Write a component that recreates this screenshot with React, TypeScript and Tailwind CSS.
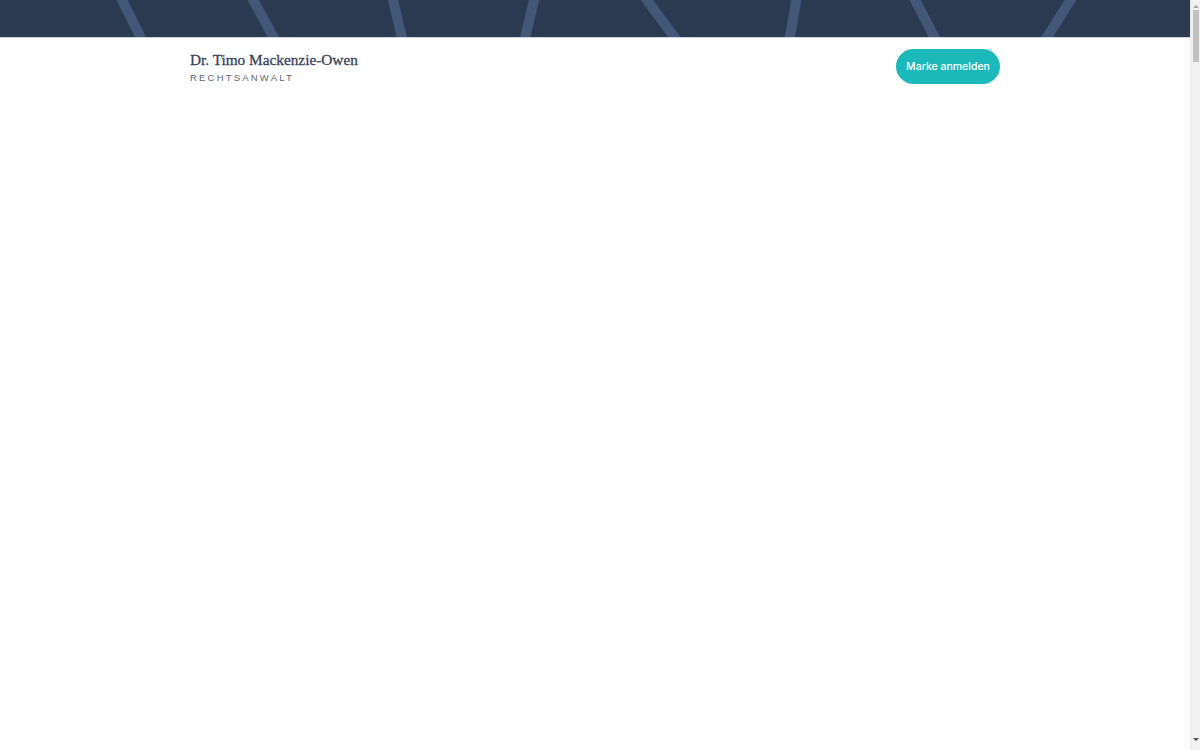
import React from 'react';

const stripes = [
  [120, 0, 143, 38],
  [251, 0, 276, 38],
  [392, 0, 403, 38],
  [535, 0, 524, 38],
  [644, 0, 678, 38],
  [797, 0, 789, 38],
  [913, 0, 937, 38],
  [1073, 0, 1044, 38],
];

function Band() {
  return (
    <div className="h-[38px] w-full bg-[#2c3a51] border-b border-[#c9d6dc] overflow-hidden">
      <svg width="1190" height="37" viewBox="0 0 1190 37">
        {stripes.map(([x1, y1, x2, y2], i) => (
          <line key={i} x1={x1} y1={y1 - 4} x2={x2} y2={y2 + 4} stroke="#435879" strokeWidth={10} />
        ))}
      </svg>
    </div>
  );
}

function Scrollbar() {
  return (
    <div className="w-[10px] h-full bg-[#f1f1f1] border-l border-[#e8e8e8] flex flex-col items-center">
      <svg width="6" height="8" viewBox="0 0 6 8" className="mt-[2px]">
        <path d="M0 6 L3 3 L6 6 Z" fill="#a3a3a3" />
      </svg>
      <div className="w-[6px] h-[52px] bg-[#c1c1c1]" />
      <div className="flex-1" />
      <svg width="6" height="8" viewBox="0 0 6 8" className="mb-[6px]">
        <path d="M0 2 L3 5 L6 2 Z" fill="#505050" />
      </svg>
    </div>
  );
}

export default function App() {
  return (
    <div className="h-[750px] flex bg-white overflow-hidden">
      <main className="flex-1">
        <Band />
        <header className="mx-auto w-[810px] flex items-center justify-between pt-[11px]">
          <div className="flex flex-col">
            <span className="font-['Liberation_Serif',serif] text-[15.3px] leading-5 text-[#36435c] [-webkit-text-stroke:0.3px_#36435c]">
              Dr. Timo Mackenzie-Owen
            </span>
            <span className="mt-[2px] font-['Liberation_Sans',sans-serif] text-[9.5px] leading-3 tracking-[2.2px] text-[#5c6574]">
              RECHTSANWALT
            </span>
          </div>
          <button className="h-[35px] w-[104px] rounded-full bg-[#1bb9b9] text-white text-[10.5px] font-medium font-['Inter',sans-serif] pt-[1px]">
            Marke anmelden
          </button>
        </header>
      </main>
      <Scrollbar />
    </div>
  );
}
